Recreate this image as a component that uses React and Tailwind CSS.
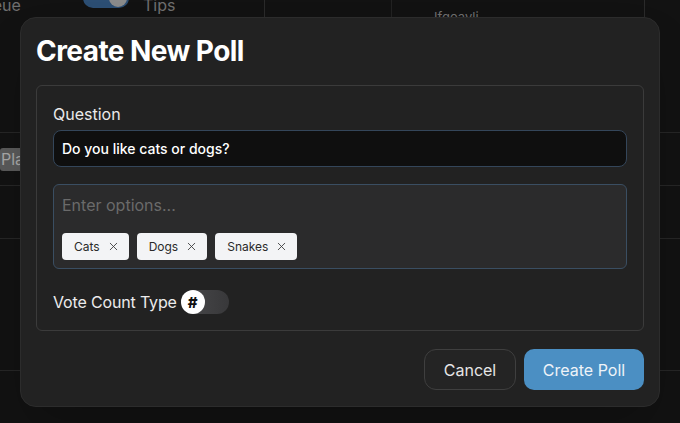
import React from "react";
import { X } from "lucide-react";

function Chip({ label }) {
  return (
    <div className="flex h-[27px] items-center gap-[7px] rounded-[4px] bg-[#f3f4f6] pl-[12px] pr-[9px] text-[12px] text-[#2a2a2a]">
      <span>{label}</span>
      <X size={13} strokeWidth={1.6} className="text-[#3a3a3a]" />
    </div>
  );
}

export default function App() {
  return (
    <div
      className="relative h-[423px] w-[680px] overflow-hidden bg-[#121212]"
      style={{ fontFamily: "Inter, 'Noto Sans', sans-serif" }}
    >
      {/* dimmed page behind */}
      <div className="flex h-full w-full flex-col text-[#6e6e6e]">
        <div className="-mt-[7px] flex h-[24px] items-center text-[16px]">
          <span className="-ml-[29px] w-[112px] shrink-0">Queue</span>
          <div className="mt-[-14px] flex h-[20px] w-[46px] shrink-0 items-center rounded-full bg-[#2c4e73] pl-[26px]">
            <div className="h-[18px] w-[18px] rounded-full bg-[#8a8a8a]" />
          </div>
          <span className="ml-[14px] w-[121px] shrink-0">Tips</span>
          <div className="h-full w-px bg-[#2a2a2a]" />
          <div className="w-[126px]" />
          <div className="h-full w-px bg-[#222]" />
          <span className="ml-[42px] mt-[26px] text-[13px]">Ifgoavli</span>
          <div className="flex-1" />
          <div className="mr-[35px] h-full w-px bg-[#2a2a2a]" />
        </div>
        <div className="h-[115px]" />
        <div className="h-px bg-[#262626]" />
        <div className="flex h-[52px] items-center">
          <div className="flex h-[23px] w-[40px] items-center rounded-[3px] bg-[#5a5a5a] pl-[1px] text-[16px] text-[#a8a8a8]">
            Play
          </div>
        </div>
        <div className="h-px bg-[#262626]" />
        <div className="h-[52px]" />
        <div className="h-px bg-[#262626]" />
        <div className="h-[131px]" />
        <div className="h-px bg-[#262626]" />
      </div>

      {/* dialog overlay */}
      <div className="absolute left-[20px] top-[17px] flex h-[390px] w-[640px] flex-col rounded-[16px] border border-[#2c2c2c] bg-[#222222] px-[15px] pt-[16px] shadow-2xl">
        <h1 className="text-[28px] font-bold leading-[35px] tracking-[-0.02em] text-white">
          Create New Poll
        </h1>
        <div className="mt-[16px] flex flex-col rounded-[6px] border border-[#3b3b3b] p-4">
          <div className="text-[16px] leading-[24px] text-[#eaeaea]">Question</div>
          <div className="mt-[4px] flex h-[37px] items-center rounded-[8px] border border-[#34465a] bg-[#0f0f0f] px-[8px] text-[14px] font-medium text-white">
            Do you like cats or dogs?
          </div>
          <div className="mt-[17px] flex h-[85px] flex-col gap-4 rounded-[6px] border border-[#3a4e62] bg-[#2b2b2c] p-2">
            <div className="text-[16px] leading-[24px] text-[#6a6a6a]">Enter options...</div>
            <div className="flex gap-2">
              <Chip label="Cats" />
              <Chip label="Dogs" />
              <Chip label="Snakes" />
            </div>
          </div>
          <div className="mt-[21px] flex h-[24px] items-center gap-[4px]">
            <span className="text-[16px] leading-[24px] tracking-[-0.01em] text-[#ececec]">Vote Count Type</span>
            <div className="flex h-[24px] w-[48px] items-center rounded-full bg-gradient-to-r from-[#4a4a4c] to-[#38383a]">
              <div className="flex h-[24px] w-[24px] items-center justify-center rounded-full bg-white text-[15px] font-extrabold leading-none text-[#111]">
                #
              </div>
            </div>
          </div>
        </div>
        <div className="mt-[18px] flex justify-end gap-2">
          <button className="h-[41px] w-[92px] rounded-[12px] border border-[#3f3f3f] bg-[#242424] text-[16px] text-[#e6e6e6]">
            Cancel
          </button>
          <button className="h-[41px] w-[120px] rounded-[10px] bg-[#4b8fc3] text-[16px] text-[#eef3f8]">
            Create Poll
          </button>
        </div>
      </div>
    </div>
  );
}
